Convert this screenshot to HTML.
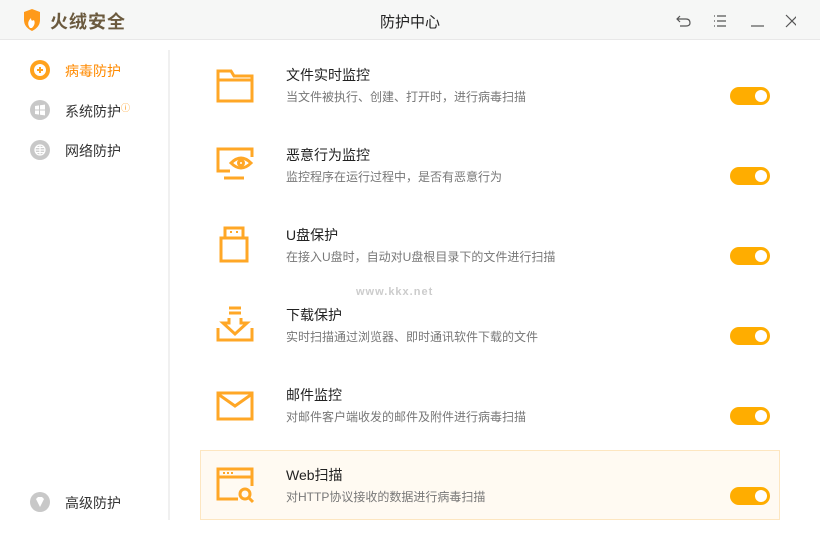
<!DOCTYPE html>
<html><head><meta charset="utf-8"><style>
*{margin:0;padding:0;box-sizing:border-box}
body{width:820px;height:540px;background:#fff;font-family:"Liberation Sans","Noto Sans CJK SC",sans-serif;position:relative;overflow:hidden;color:#333}
.tb{position:absolute;left:0;top:0;width:820px;height:40px;background:#f6f7f6;border-bottom:1px solid #e8e8e8}
.brand{position:absolute;left:50px;top:8px;font-size:18px;font-weight:bold;color:#6b5a3e;letter-spacing:1px}
.title{position:absolute;left:0;width:820px;top:11px;text-align:center;font-size:15px;color:#222}
.nav{position:absolute;left:65px;font-size:14px;color:#333}
.ic{position:absolute;left:30px;width:20px;height:20px;border-radius:50%;background:#c8c8c8}
.div{position:absolute;left:168px;top:50px;width:2px;height:470px;background:#f0f0f0}
.row{position:absolute;left:200px;width:580px;height:70px}
.row .t{position:absolute;left:86px;top:15px;font-size:14px;color:#222}
.row .d{position:absolute;left:86px;top:38px;font-size:12px;color:#777}
.row svg{position:absolute;left:16px;top:16px}
.tg{position:absolute;left:530px;top:37px;width:40px;height:18px;border-radius:9px;background:#ffad00}
.tg:after{content:"";position:absolute;right:3px;top:3px;width:12px;height:12px;border-radius:50%;background:#fff}
</style></head><body>
<div class="tb">
<svg style="position:absolute;left:22px;top:9px" width="20" height="22" viewBox="0 0 20 22"><path d="M2 3 L10 0 L18 3 L18 11 Q18 18 10 22 Q2 18 2 11Z" fill="#ff9a1a"/><path d="M8 19 Q4 14 9 9 Q9 13 12 11 Q14 15 10 19Z" fill="#fff"/></svg>
<div class="brand">火绒安全</div>
<div class="title">防护中心</div>
<svg style="position:absolute;left:676px;top:12px" width="120" height="16" viewBox="0 0 120 16" fill="none" stroke="#555" stroke-width="1.2">
<path d="M4 4 L1 7 L4 10 M1 7 H10 Q14 7 14 11 Q14 14 10 14 H4"/>
<path d="M38 4h1M41 4h9M38 9h1M41 9h9M38 14h1M41 14h9"/>
<path d="M75 14H88"/>
<path d="M111 3L123 15M123 3L111 15" transform="translate(-1,0)"/>
</svg>
</div>
<div class="ic" style="top:60px;background:#ffa21d"><div style="position:absolute;left:4px;top:4px;width:12px;height:12px;border-radius:50%;background:#fff"></div><div style="position:absolute;left:7px;top:9px;width:6px;height:2px;background:#ffa21d"></div><div style="position:absolute;left:9px;top:7px;width:2px;height:6px;background:#ffa21d"></div></div>
<div class="nav" style="top:61px;color:#ff8a00">病毒防护</div>
<div class="ic" style="top:100px"><svg width="20" height="20" viewBox="0 0 20 20" fill="#fff"><path d="M5 6L9 5.4V9.5H5Z M10 5.3L15 4.6V9.5H10Z M5 10.5H9V14.6L5 14Z M10 10.5H15V15.4L10 14.7Z"/></svg></div>
<div class="nav" style="top:101px">系统防护<sup style="color:#ff9a1a;font-size:9px">ⓘ</sup></div>
<div class="ic" style="top:140px"><svg width="20" height="20" viewBox="0 0 20 20" fill="none" stroke="#fff" stroke-width="1.2"><circle cx="10" cy="10" r="5"/><path d="M5 10H15M10 5V15M6 7.5H14M6 12.5H14"/></svg></div>
<div class="nav" style="top:141px">网络防护</div>
<div class="ic" style="top:492px"><svg width="20" height="20" viewBox="0 0 20 20" fill="#fff"><path d="M6 7L8 5H12L14 7L10 15Z"/></svg></div>
<div class="nav" style="top:493px">高级防护</div>
<div class="div"></div>

<div class="row" style="top:50px"><svg width="38" height="38" viewBox="0 0 38 38" fill="none" stroke="#ffa726" stroke-width="3"><path d="M2 5H15L18 10H36V35H2Z M2 14H36"/></svg><div class="t">文件实时监控</div><div class="d">当文件被执行、创建、打开时，进行病毒扫描</div><div class="tg"></div></div>
<div class="row" style="top:130px"><svg width="38" height="38" viewBox="0 0 38 38" fill="none" stroke="#ffa726" stroke-width="3"><path d="M14 25H2V3H36V11 M8 32H28"/><path d="M15 17Q25 7 35 17Q25 27 15 17Z"/><circle cx="25" cy="17" r="2.5"/></svg><div class="t">恶意行为监控</div><div class="d">监控程序在运行过程中，是否有恶意行为</div><div class="tg"></div></div>
<div class="row" style="top:210px"><svg width="38" height="38" viewBox="0 0 38 38" fill="none" stroke="#ffa726" stroke-width="3"><path d="M9 12V2H27V12 M5 12H31V35H5Z"/><path d="M14 6h2M20 6h2" stroke-width="2"/></svg><div class="t">U盘保护</div><div class="d">在接入U盘时，自动对U盘根目录下的文件进行扫描</div><div class="tg"></div></div>
<div class="row" style="top:290px"><svg width="38" height="38" viewBox="0 0 38 38" fill="none" stroke="#ffa726" stroke-width="3"><path d="M2 22V34H36V22 M13 2H25 M13 7H25 M13 12V17H7L19 28L31 17H25V12"/></svg><div class="t">下载保护</div><div class="d">实时扫描通过浏览器、即时通讯软件下载的文件</div><div class="tg"></div></div>
<div class="row" style="top:370px"><svg width="38" height="38" viewBox="0 0 38 38" fill="none" stroke="#ffa726" stroke-width="3"><path d="M2 7H36V33H2Z M2 8L19 20L36 8"/></svg><div class="t">邮件监控</div><div class="d">对邮件客户端收发的邮件及附件进行病毒扫描</div><div class="tg"></div></div>
<div class="row" style="top:450px;background:#fffaf2;border:1px solid #fde6c0"><svg width="38" height="38" viewBox="0 0 38 38" fill="none" stroke="#ffa726" stroke-width="3" style="top:15px;left:15px"><path d="M22 33H2V3H36V20 M2 11H36"/><path d="M7 7h2M11 7h2M15 7h2" stroke-width="2"/><circle cx="29" cy="28" r="5"/><path d="M33 32L37 36"/></svg><div class="t" style="top:14px;left:85px">Web扫描</div><div class="d" style="top:37px;left:85px">对HTTP协议接收的数据进行病毒扫描</div><div class="tg" style="top:36px;left:529px"></div></div>
<div style="position:absolute;left:356px;top:286px;font-size:11px;font-weight:bold;color:#ccc;letter-spacing:1px">www.kkx.net</div>
</body></html>
